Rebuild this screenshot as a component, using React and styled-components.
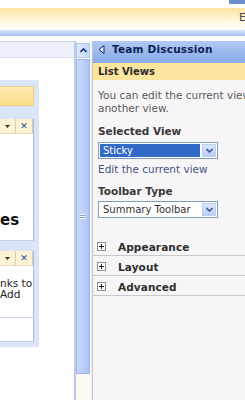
import React from "react"
import styled, { createGlobalStyle } from "styled-components"

const GlobalStyle = createGlobalStyle`
  html, body {
    margin: 0;
    padding: 0;
    background: #ffffff;
    overflow: hidden;
  }
  body {
    font-family: "DejaVu Sans", Verdana, sans-serif;
    width: 245px;
    height: 400px;
  }
`

const Page = styled.div`
  width: 245px;
  height: 400px;
  overflow: hidden;
  display: flex;
  flex-direction: column;
`

const TopStrip = styled.div`
  height: 8px;
  flex: none;
  display: flex;
  justify-content: flex-end;
`

const TopTab = styled.div`
  width: 16px;
  height: 4px;
  background: #6a8dcb;
`

const StatusBar = styled.div`
  height: 22px;
  flex: none;
  background: linear-gradient(#fbe3a0, #fff6dc 55%, #fffefa);
  padding-left: 239px;
  font-size: 11px;
  line-height: 20px;
  color: #4a4a4a;
  white-space: nowrap;
`

const BlueBar = styled.div`
  height: 6px;
  flex: none;
  background: linear-gradient(#d7e4f9, #a9c2ee);
`

const Main = styled.div`
  margin-top: 5px;
  flex: 1;
  display: flex;
  width: 400px;
`

const LeftPane = styled.div`
  width: 74px;
  flex: none;
  border-top: 1px solid #c8d5ef;
  border-right: 2px solid #bccbe9;
  display: flex;
  flex-direction: column;
`

const LeftTitle = styled.div`
  height: 15px;
  background: #eef1fb;
  border-bottom: 1px solid #d9e1f4;
`

const Zone = styled.div`
  margin-top: 22px;
  width: 34px;
  padding: 6px 5px 5px 0;
  background: #dbe5f7;
  display: flex;
  flex-direction: column;
`

const ZoneHeader = styled.div`
  height: 18px;
  margin-bottom: 13px;
  background: linear-gradient(#fdeab0, #fbdc8c);
  border: 1px solid #efcf85;
  border-left: none;
`

const WebPart = styled.div`
  background: #ffffff;
  border-right: 1px solid #a8bbe0;
  border-bottom: 1px solid #c3d1ec;
  height: ${p => p.$h}px;
  margin-bottom: ${p => p.$gap || 0}px;
  display: flex;
  flex-direction: column;
`

const PartBar = styled.div`
  height: 14px;
  flex: none;
  display: grid;
  grid-template-columns: 16px 1fr;
  background: #fdf3d4;
  border-bottom: 1px solid #e9dcb4;
`

const PartCell = styled.div`
  display: flex;
  align-items: center;
  justify-content: center;
  border-right: 1px solid #d9cfae;
  font-size: 9px;
  font-weight: bold;
  color: ${p => p.$color || "#333"};
`

const BigText = styled.div`
  margin-top: auto;
  margin-bottom: 12px;
  font-size: 15px;
  font-weight: bold;
  color: #111;
  line-height: 16px;
`

const SmallText = styled.div`
  margin-top: 12px;
  font-size: 10.5px;
  line-height: 11px;
  color: #222;
  white-space: nowrap;
`

const Divider = styled.div`
  margin-top: 17px;
  border-top: 1px solid #c7d4ee;
`

const ScrollCol = styled.div`
  width: 15px;
  flex: none;
  display: flex;
  flex-direction: column;
  padding-top: 1px;
  background: #fdf8f1;
  border-right: 1px solid #eef2fa;
`

const ScrollButton = styled.div`
  height: 13px;
  margin: 1px 1px 1px 0;
  border: 1px solid #b5c8ee;
  background: linear-gradient(90deg, #dde8fb, #c5d7f7);
  display: flex;
  align-items: center;
  justify-content: center;
`

const Thumb = styled.div`
  height: 313px;
  margin-right: 1px;
  border: 1px solid #9fb6e6;
  background: linear-gradient(90deg, #c9d9f8, #b9cdf5 60%, #adc3f1);
  display: flex;
  align-items: center;
  justify-content: center;
`

const Grip = styled.div`
  width: 6px;
  height: 5px;
  background: repeating-linear-gradient(#eef3fd 0 1px, #8ea7d8 1px 2px);
`

const ToolPane = styled.div`
  width: 230px;
  flex: none;
  background: #f7f5f7;
  border-left: 1px solid #c3c3c8;
  display: flex;
  flex-direction: column;
`

const PaneHeader = styled.div`
  height: 22px;
  box-sizing: border-box;
  background: linear-gradient(#b3cbf3, #9ab8ec 50%, #8cacea);
  display: flex;
  align-items: flex-start;
  gap: 7px;
  padding: 2px 0 0 5px;
  font-size: 10.5px;
  font-weight: bold;
  line-height: 13px;
  color: #0c1f57;
  letter-spacing: 0.2px;

  svg {
    margin-top: 2px;
  }
`

const SectionBar = styled.div`
  height: 17px;
  background: #fde5a0;
  padding-left: 5px;
  font-size: 10px;
  font-weight: bold;
  line-height: 18px;
  color: #2b2b2b;
`

const Body = styled.div`
  padding: 0 6px 0 5px;
  display: flex;
  flex-direction: column;
`

const Description = styled.div`
  margin-top: 9px;
  font-size: 10.5px;
  line-height: 13px;
  color: #5a5a5a;
`

const Label = styled.div`
  margin-top: ${p => p.$top}px;
  font-size: 10.5px;
  font-weight: bold;
  line-height: 12px;
  color: #3a3a3a;
`

const Select = styled.div`
  margin-top: ${p => p.$top}px;
  width: 118px;
  height: 15px;
  border: 1px solid #7f9db9;
  background: #ffffff;
  display: flex;
`

const SelectValue = styled.div`
  flex: 1;
  margin: 1px;
  padding-left: 3px;
  font-size: 10px;
  line-height: 13px;
  color: ${p => (p.$selected ? "#ffffff" : "#333333")};
  background: ${p => (p.$selected ? "#3169c6" : "transparent")};
  white-space: nowrap;
  overflow: hidden;
`

const DropButton = styled.div`
  width: 14px;
  margin: 1px;
  border: 1px solid #bcd0f5;
  background: linear-gradient(#dbe6fb, #b9cdf5);
  display: flex;
  align-items: center;
  justify-content: center;
  box-sizing: border-box;
`

const LinkText = styled.div`
  margin-top: 4px;
  font-size: 10.5px;
  line-height: 13px;
  color: #43577f;
`

const Expanders = styled.div`
  margin-top: 18px;
  display: flex;
  flex-direction: column;
`

const ExpandRow = styled.div`
  height: 20px;
  box-sizing: border-box;
  border-bottom: 1px solid #c9c9cb;
  display: flex;
  align-items: center;
  padding: 2px 0 0 4px;
  gap: 12px;
  font-size: 10.5px;
  font-weight: bold;
  color: #2e2e2e;
  letter-spacing: 0.1px;
`

const PlusBox = styled.div`
  width: 7px;
  height: 7px;
  border: 1px solid #8f8f8f;
  background: #ffffff;
  display: flex;
  align-items: center;
  justify-content: center;
`

const Chevron = ({ up }) => (
  <svg width="7" height="5" viewBox="0 0 7 5">
    <path
      d={up ? "M0.5 4 L3.5 1 L6.5 4" : "M0.5 1 L3.5 4 L6.5 1"}
      fill="none"
      stroke={up ? "#1d3373" : "#3f5a96"}
      strokeWidth="1.6"
    />
  </svg>
)

const Plus = () => (
  <svg width="5" height="5" viewBox="0 0 5 5">
    <path d="M0 2.5 H5 M2.5 0 V5" stroke="#222" strokeWidth="1" />
  </svg>
)

const BackArrow = () => (
  <svg width="7" height="9" viewBox="0 0 7 9">
    <path d="M6 0.5 L1 4.5 L6 8.5 Z" fill="#dfe8fa" stroke="#1a2c63" strokeWidth="1" />
  </svg>
)

const Dropdown = ({ value, selected, top }) => (
  <Select $top={top}>
    <SelectValue $selected={selected}>{value}</SelectValue>
    <DropButton>
      <Chevron />
    </DropButton>
  </Select>
)

const PartToolbar = () => (
  <PartBar>
    <PartCell>
      <svg width="5" height="3" viewBox="0 0 5 3">
        <path d="M0 0 H5 L2.5 3 Z" fill="#333" />
      </svg>
    </PartCell>
    <PartCell $color="#2448a0">✕</PartCell>
  </PartBar>
)

export default function App() {
  const sections = ["Appearance", "Layout", "Advanced"]
  return (
    <Page>
      <GlobalStyle />
      <TopStrip>
        <TopTab />
      </TopStrip>
      <StatusBar>Exit Edit Mode</StatusBar>
      <BlueBar />
      <Main>
        <LeftPane>
          <LeftTitle />
          <Zone>
            <ZoneHeader />
            <WebPart $h={121} $gap={10}>
              <PartToolbar />
              <BigText>es</BigText>
            </WebPart>
            <WebPart $h={90}>
              <PartToolbar />
              <SmallText>
                nks to
                <br />
                Add
              </SmallText>
              <Divider />
            </WebPart>
          </Zone>
        </LeftPane>
        <ScrollCol>
          <ScrollButton>
            <Chevron up />
          </ScrollButton>
          <Thumb>
            <Grip />
          </Thumb>
        </ScrollCol>
        <ToolPane>
          <PaneHeader>
            <BackArrow />
            Team Discussion
          </PaneHeader>
          <SectionBar>List Views</SectionBar>
          <Body>
            <Description>
              You can edit the current view or select another view.
            </Description>
            <Label $top={10}>Selected View</Label>
            <Dropdown value="Sticky" selected top={5} />
            <LinkText>Edit the current view</LinkText>
            <Label $top={9}>Toolbar Type</Label>
            <Dropdown value="Summary Toolbar" top={4} />
          </Body>
          <Expanders>
            {sections.map(s => (
              <ExpandRow key={s}>
                <PlusBox>
                  <Plus />
                </PlusBox>
                {s}
              </ExpandRow>
            ))}
          </Expanders>
        </ToolPane>
      </Main>
    </Page>
  )
}
